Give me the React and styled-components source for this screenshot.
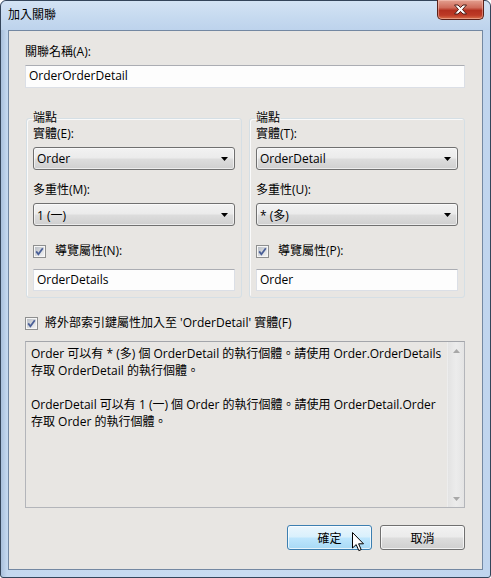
import React from 'react';
import styled, {createGlobalStyle} from 'styled-components';

const Global = createGlobalStyle`
    html, body {
        margin: 0;
        padding: 0;
        background: #ffffff;
        overflow: hidden;
    }
    * {
        box-sizing: border-box;
    }
`

const FONT = `"Open Sans", "Noto Sans CJK TC", sans-serif`;

const CheckMark = () => (
    <svg width="13" height="13" viewBox="0 0 13 13">
        <defs>
            <linearGradient id="cbg" x1="0" y1="0" x2="1" y2="1">
                <stop offset="0" stopColor="#b9bec5" />
                <stop offset="1" stopColor="#f4f4f4" />
            </linearGradient>
        </defs>
        <rect x="0.5" y="0.5" width="12" height="12" fill="#f6f6f6" stroke="#8e8f8f" />
        <rect x="2" y="2" width="9" height="9" fill="url(#cbg)" />
        <path d="M3.2 6.4 L5.4 9.2 L9.8 3.2" fill="none" stroke="#4a5f97" strokeWidth="1.8" />
    </svg>
);

const Arrow = () => (
    <svg width="7" height="4" viewBox="0 0 7 4">
        <path d="M0 0 H7 L3.5 4 Z" fill="#000" />
    </svg>
);

const Combo = ({value}) => (
    <ComboBox>
        <span>{value}</span>
        <Arrow />
    </ComboBox>
);

const CheckRow = ({label, gap}) => (
    <CheckLine $gap={gap}>
        <CheckMark />
        <span>{label}</span>
    </CheckLine>
);

const End = ({entity, entityLabel, mult, multLabel, nav, navLabel}) => (
    <Group>
        <Legend>端點</Legend>
        <Label>{entityLabel}</Label>
        <Combo value={entity} />
        <Label $top={12}>{multLabel}</Label>
        <Combo value={mult} />
        <CheckRow label={navLabel} gap={9} />
        <TextBox $small>{nav}</TextBox>
    </Group>
);

const App = () => {
    return (
        <Window>
            <Global />
            <TitleBar>
                <Title>加入關聯</Title>
                <CloseButton>
                    <svg width="15" height="11" viewBox="0 0 15 11">
                        <path d="M1.5 1 H5 L7.5 3.6 L10 1 H13.5 L9.5 5.5 L13.5 10 H10 L7.5 7.4 L5 10 H1.5 L5.5 5.5 Z"
                              fill="#fff" stroke="#4b1d16" strokeWidth="1" strokeLinejoin="round" />
                    </svg>
                </CloseButton>
            </TitleBar>
            <Client>
                <Label>關聯名稱(A):</Label>
                <TextBox>OrderOrderDetail</TextBox>
                <Groups>
                    <End entityLabel='實體(E):' entity='Order'
                         multLabel='多重性(M):' mult='1 (一)'
                         navLabel='導覽屬性(N):' nav='OrderDetails' />
                    <End entityLabel='實體(T):' entity='OrderDetail'
                         multLabel='多重性(U):' mult='* (多)'
                         navLabel='導覽屬性(P):' nav='Order' />
                </Groups>
                <CheckRow label="將外部索引鍵屬性加入至 'OrderDetail' 實體(F)" gap={7} />
                <Description>
                    <DescText>
                        <Line>Order 可以有 * (多) 個 OrderDetail 的執行個體。請使用 Order.OrderDetails</Line>
                        <Line>存取 OrderDetail 的執行個體。</Line>
                        <Line>&nbsp;</Line>
                        <Line>OrderDetail 可以有 1 (一) 個 Order 的執行個體。請使用 OrderDetail.Order</Line>
                        <Line>存取 Order 的執行個體。</Line>
                    </DescText>
                    <ScrollBar>
                        <svg width="7" height="4" viewBox="0 0 7 4"><path d="M0 4 H7 L3.5 0 Z" fill="#a8a8a8" /></svg>
                        <svg width="7" height="4" viewBox="0 0 7 4"><path d="M0 0 H7 L3.5 4 Z" fill="#a8a8a8" /></svg>
                    </ScrollBar>
                </Description>
                <Buttons>
                    <Button $hot>
                        確定
                        <Cursor width="13" height="20" viewBox="0 0 13 20">
                            <path d="M0.5 0.5 V16 L4.2 12.6 L6.8 18.6 L9.2 17.6 L6.6 11.8 H11.5 Z"
                                  fill="#fff" stroke="#000" strokeWidth="1" strokeLinejoin="round" />
                        </Cursor>
                    </Button>
                    <Button>取消</Button>
                </Buttons>
            </Client>
        </Window>
    );
};

export default App;

const Window = styled.div`
    width: 491px;
    height: 578px;
    display: flex;
    flex-direction: column;
    border: 1px solid #34455a;
    border-radius: 6px 6px 3px 3px;
    background: linear-gradient(90deg, #a9c0dc 0px, #c4d8ef 6px, #c9dcf1 50%, #c0d5ee 100%);
    font-family: ${FONT};
    font-size: 12px;
    color: #000;
`
const TitleBar = styled.div`
    height: 29px;
    display: flex;
    justify-content: space-between;
    align-items: flex-start;
    padding: 0 6px 0 7px;
    background: linear-gradient(180deg, #d3e3f4 0%, #c5d9ef 60%, #bdd3ec 100%);
    border-radius: 6px 6px 0 0;
`
const Title = styled.div`
    padding-top: 6px;
    line-height: 16px;
`
const CloseButton = styled.div`
    width: 47px;
    height: 20px;
    margin-top: -1px;
    display: flex;
    align-items: center;
    justify-content: center;
    border: 1px solid #5b2118;
    border-top: none;
    border-radius: 0 0 5px 5px;
    background: linear-gradient(180deg, #e3a090 0%, #cf6c5b 40%, #b3301f 55%, #bd3a26 80%, #d8704a 100%);
    box-shadow: inset 0 0 0 1px rgba(255, 210, 200, 0.45);
`
const Client = styled.div`
    flex: 1;
    margin: 0 7px 7px 7px;
    display: flex;
    flex-direction: column;
    padding: 13px 17px 0 16px;
    border: 1px solid #7388a2;
    background: #e8e6e3;
`
const Label = styled.div`
    line-height: 16px;
    margin-top: ${(props) => props.$top || 0}px;
    margin-bottom: 5px;
    white-space: nowrap;
`
const TextBox = styled.div`
    height: ${(props) => (props.$small ? 22 : 23)}px;
    line-height: 20px;
    padding: 0 3px;
    background: #fdfdfd;
    border: 1px solid #dbdfe6;
    border-top-color: #abadb3;
    white-space: nowrap;
`
const Groups = styled.div`
    display: grid;
    grid-template-columns: 1fr 1fr;
    gap: 7px;
    margin: 22px 0 0 1px;
`
const Group = styled.fieldset`
    margin: 0;
    min-width: 0;
    padding: 0 6px 6px 6px;
    border: 1px solid #d5dfe5;
    border-radius: 3px;
    box-shadow: inset 1px 1px 0 #fafafa;
`
const Legend = styled.legend`
    padding: 0 1px;
    margin-left: -1px;
    line-height: 16px;
`
const ComboBox = styled.div`
    height: 23px;
    display: flex;
    align-items: center;
    justify-content: space-between;
    padding: 0 6px 0 3px;
    border: 1px solid #707070;
    border-radius: 3px;
    background: linear-gradient(180deg, #f2f2f2 0%, #ebebeb 48%, #dddddd 52%, #cfcfcf 100%);
    box-shadow: inset 0 0 0 1px rgba(255, 255, 255, 0.6);
    white-space: nowrap;
`
const CheckLine = styled.div`
    display: flex;
    align-items: center;
    gap: ${(props) => props.$gap}px;
    height: 16px;
    margin: 17px 0 10px 0;
    white-space: nowrap;
    line-height: 16px;
`
const Description = styled.div`
    height: 167px;
    display: flex;
    border: 1px solid #b3b5ba;
    border-top-color: #a3a5aa;
    background: #e8e6e3;
`
const DescText = styled.div`
    flex: 1;
    padding: 3px 5px;
    line-height: 17px;
`
const Line = styled.div`
    white-space: nowrap;
    height: 17px;
`
const ScrollBar = styled.div`
    width: 17px;
    display: flex;
    flex-direction: column;
    justify-content: space-between;
    align-items: center;
    padding: 7px 0 6px 0;
    border-left: 1px solid #ededed;
    background: linear-gradient(90deg, #e3e3e3, #ececec 50%, #e4e4e4);
`
const Buttons = styled.div`
    display: flex;
    justify-content: flex-end;
    gap: 8px;
    margin-top: 17px;
`
const Button = styled.div`
    position: relative;
    width: 85px;
    height: 25px;
    display: flex;
    align-items: center;
    justify-content: center;
    border: 1px solid ${(props) => (props.$hot ? '#3c7fb1' : '#707070')};
    border-radius: 3px;
    background: ${(props) => (props.$hot
        ? 'linear-gradient(180deg, #eaf6fd 0%, #d9f0fc 48%, #bee6fd 52%, #a7d9f5 100%)'
        : 'linear-gradient(180deg, #f2f2f2 0%, #ebebeb 48%, #dddddd 52%, #cfcfcf 100%)')};
    box-shadow: inset 0 0 0 1px rgba(255, 255, 255, 0.7);
`
const Cursor = styled.svg`
    position: absolute;
    left: 64px;
    top: 6px;
`
